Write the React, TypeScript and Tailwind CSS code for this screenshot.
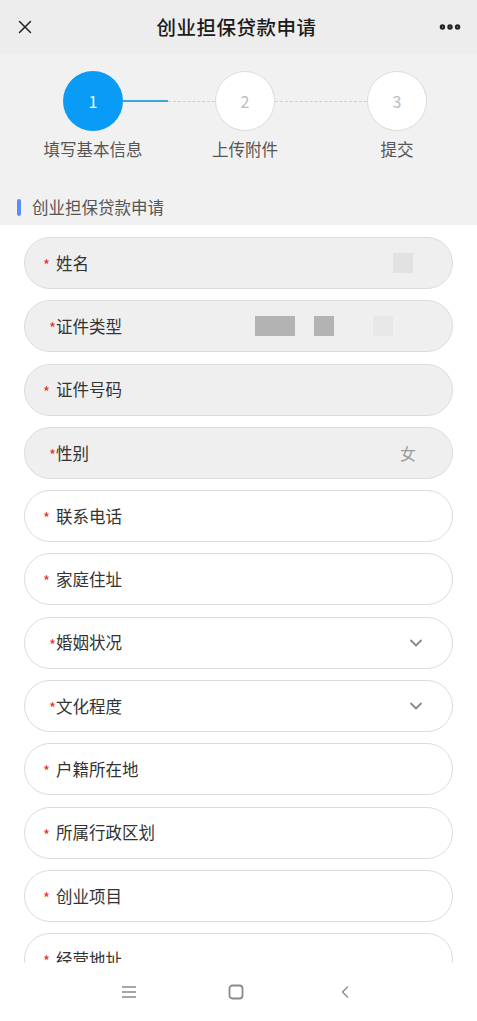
import { ChevronDown, ChevronLeft, MoreHorizontal, X } from "lucide-react";

type Field = {
  label: string;
  tight?: boolean;
  disabled?: boolean;
  value?: string;
  select?: boolean;
  maskMr?: string;
  masks?: { w: string; c: string; ml: string }[];
};

const fields: Field[] = [
  { label: "姓名", disabled: true, maskMr: "mr-[5px]", masks: [{ w: "w-[20px]", c: "bg-[#e2e2e2]", ml: "ml-0" }] },
  {
    label: "证件类型",
    tight: true,
    disabled: true,
    maskMr: "mr-[25px]",
    masks: [
      { w: "w-[40px]", c: "bg-[#b3b3b3]", ml: "ml-0" },
      { w: "w-[20px]", c: "bg-[#b3b3b3]", ml: "ml-[19px]" },
      { w: "w-[20px]", c: "bg-[#e8e8e8]", ml: "ml-[39px]" },
    ],
  },
  { label: "证件号码", disabled: true },
  { label: "性别", tight: true, disabled: true, value: "女" },
  { label: "联系电话" },
  { label: "家庭住址" },
  { label: "婚姻状况", tight: true, select: true },
  { label: "文化程度", tight: true, select: true },
  { label: "户籍所在地" },
  { label: "所属行政区划" },
  { label: "创业项目" },
  { label: "经营地址" },
];

const font = { fontFamily: '"Noto Sans CJK SC", "Noto Sans", sans-serif' };

function Star({ tight }: { tight?: boolean }) {
  return (
    <span
      className={`text-[#e5322d] text-[15px] leading-none mt-[3px] ${tight ? "ml-[6px] mr-0" : "mr-[6px]"}`}
    >
      *
    </span>
  );
}

export default function App() {
  return (
    <div className="w-[477px] h-[1021px] flex flex-col bg-white overflow-hidden" style={font}>
      {/* 顶部导航 */}
      <header className="h-[54px] shrink-0 bg-[#ededed] flex items-center justify-between px-[14px]">
        <X className="w-[22px] h-[22px] text-[#222]" strokeWidth={1.6} />
        <h1 className="text-[19.5px] font-medium text-[#1b1b1b] tracking-[0.5px]">创业担保贷款申请</h1>
        <MoreHorizontal className="w-[26px] h-[26px] text-[#222]" strokeWidth={3} />
      </header>

      <div className="flex-1 overflow-hidden flex flex-col">
        {/* 步骤条 */}
        <section className="bg-[#f1f1f1] pt-[17px] shrink-0">
          <div className="flex items-center pl-[63px] pr-[50px]">
            <div className="w-[60px] h-[60px] rounded-full bg-[#0a9bf6] flex items-center justify-center text-white text-[16px]">
              1
            </div>
            <div className="flex-1 flex items-center">
              <div className="w-[45px] h-[1.5px] bg-[#3aa6dc]" />
              <div className="flex-1 border-t border-dashed border-[#cfcfcf]" />
            </div>
            <div className="w-[60px] h-[60px] rounded-full bg-white border border-[#dcdcdc] flex items-center justify-center text-[#bdbdbd] text-[16px]">
              2
            </div>
            <div className="flex-1 border-t border-dashed border-[#cfcfcf]" />
            <div className="w-[60px] h-[60px] rounded-full bg-white border border-[#dcdcdc] flex items-center justify-center text-[#bdbdbd] text-[16px]">
              3
            </div>
          </div>
          <div className="flex pl-[17px] mt-[5px]">
            {["填写基本信息", "上传附件", "提交"].map((s) => (
              <div key={s} className="w-[152px] text-center text-[16.5px] leading-[26px] text-[#555]">
                {s}
              </div>
            ))}
          </div>
          <div className="flex items-center h-[36px] mt-[27px] pl-[17px]">
            <div className="w-[4px] h-[17px] rounded-full bg-[#5b8ef5]" />
            <span className="ml-[11px] text-[16.5px] text-[#555]">创业担保贷款申请</span>
          </div>
        </section>

        {/* 表单 */}
        <section className="flex flex-col gap-[11.3px] pt-[12px] px-[24px]">
          {fields.map((f) => (
            <div
              key={f.label}
              className={`h-[52px] shrink-0 rounded-full border border-[#dcdcdc] flex items-center pl-[18px] pr-[34px] ${
                f.disabled ? "bg-[#efefef]" : "bg-white"
              }`}
            >
              <Star tight={f.tight} />
              <span className="text-[16.5px] text-[#333]">{f.label}</span>
              <div className="flex-1" />
              {f.masks && (
                <div className={`flex items-center ${f.maskMr}`}>
                  {f.masks.map((m, i) => (
                    <div key={i} className={`${m.w} h-[20px] ${m.c} ${m.ml}`} />
                  ))}
                </div>
              )}
              {f.value && <span className="text-[16px] text-[#9a9a9a] mr-[2px]">{f.value}</span>}
              {f.select && (
                <ChevronDown className="w-[20px] h-[20px] text-[#888] -mr-[8px]" strokeWidth={2.2} />
              )}
            </div>
          ))}
        </section>
      </div>

      {/* 系统导航栏 */}
      <nav className="h-[58px] shrink-0 bg-white flex items-center text-[#8a8a8a]">
        <div className="w-[477px] flex items-center">
          <div className="ml-[120px]">
            <svg width="18" height="16" viewBox="0 0 18 16" fill="none" stroke="currentColor" strokeWidth="1.6">
              <path d="M2 3h14M2 8h14M2 13h14" />
            </svg>
          </div>
          <div className="ml-[89px]">
            <svg width="18" height="18" viewBox="0 0 18 18" fill="none" stroke="currentColor" strokeWidth="1.8">
              <rect x="2.5" y="2.5" width="13" height="13" rx="3" />
            </svg>
          </div>
          <div className="ml-[90px]">
            <ChevronLeft className="w-[20px] h-[20px]" strokeWidth={1.6} />
          </div>
        </div>
      </nav>
    </div>
  );
}
